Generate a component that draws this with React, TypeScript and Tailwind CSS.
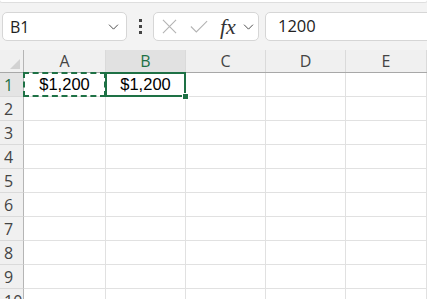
import React from 'react';

const COLS = ['A', 'B', 'C', 'D', 'E'];
const ROWS = [1, 2, 3, 4, 5, 6, 7, 8, 9, 10];
const WIDTHS = ['w-[82px]', 'w-[80px]', 'w-[80px]', 'w-[80px]', 'w-[81px]'];

const Chevron = ({ className }: { className?: string }) => (
  <svg viewBox="0 0 12 7" className={className} fill="none" stroke="#444" strokeWidth="1.1">
    <path d="M0.8 0.8 L6 6 L11.2 0.8" />
  </svg>
);

const FormulaBar = () => (
  <div className="flex h-[47px] items-start bg-[#f3f3f3] pt-[9px]">
    {/* name box */}
    <div className="ml-[2px] flex h-[29px] w-[125px] shrink-0 items-center rounded-[5px] border border-[#d6d6d6] bg-white pl-[7px] pr-[7px]">
      <span className="flex-1 text-[16px] text-[#222]">B1</span>
      <Chevron className="h-[6px] w-[11px]" />
    </div>
    {/* more menu dots */}
    <div className="flex h-[29px] w-[26px] shrink-0 flex-col items-center justify-center gap-[3px]">
      <span className="h-[3px] w-[3px] bg-[#444]" />
      <span className="h-[3px] w-[3px] bg-[#444]" />
      <span className="h-[3px] w-[3px] bg-[#444]" />
    </div>
    {/* cancel / enter / fx */}
    <div className="flex h-[29px] w-[106px] shrink-0 items-center rounded-[5px] border border-[#d6d6d6] bg-white">
      <svg viewBox="0 0 16 16" className="ml-[8px] h-[15px] w-[15px]" fill="none" stroke="#b4b4b4" strokeWidth="1.2">
        <path d="M1 1 L15 15 M15 1 L1 15" />
      </svg>
      <svg viewBox="0 0 20 14" className="ml-[13px] h-[13px] w-[18px]" fill="none" stroke="#b4b4b4" strokeWidth="1.2">
        <path d="M1 7 L7 13 L19 1" />
      </svg>
      <span className="ml-[12px] font-['Liberation_Serif',serif] text-[22px] italic leading-none text-[#333]">fx</span>
      <Chevron className="ml-[7px] h-[6px] w-[11px]" />
    </div>
    {/* formula input */}
    <div className="ml-[6px] flex h-[29px] w-[180px] shrink-0 items-center rounded-[5px] border border-[#d6d6d6] bg-white pl-[12px]">
      <span className="text-[16.5px] text-[#222]">1200</span>
    </div>
  </div>
);

const Grid = () => (
  <div className="flex flex-col">
    {/* column headers */}
    <div className="flex h-[23px] border-b border-[#a8a8a8] bg-[#f0f0f0]">
      <div className="relative h-full w-[24px] shrink-0 border-r border-[#b5b5b5]">
        <svg viewBox="0 0 10 10" className="absolute bottom-[3px] right-[3px] h-[10px] w-[10px]">
          <path d="M10 0 L10 10 L0 10 Z" fill="#d2d2d2" />
        </svg>
      </div>
      {COLS.map((c, i) => (
        <div
          key={c}
          className={`${WIDTHS[i]} flex h-full shrink-0 items-center justify-center border-r border-[#dadada] text-[16px] ${
            c === 'B' ? 'bg-[#e1e1e1] text-[#1e7145]' : 'text-[#444]'
          }`}
        >
          {c}
        </div>
      ))}
    </div>
    {/* rows */}
    {ROWS.map((r) => (
      <div key={r} className="flex h-[24px] shrink-0">
        <div
          className={`flex h-full w-[24px] shrink-0 items-center border-b border-r border-b-[#dadada] border-r-[#b5b5b5] pl-[4px] text-[16px] ${
            r === 1 ? 'bg-[#e4e4e4] text-[#1e7145]' : 'bg-[#f0f0f0] text-[#444]'
          }`}
        >
          {r}
        </div>
        {COLS.map((c, i) => (
          <div
            key={c}
            className={`${WIDTHS[i]} relative flex h-full shrink-0 items-center justify-center border-b border-r border-[#e1e1e1] font-['Liberation_Sans',sans-serif] text-[16.5px] text-black`}
          >
            {r === 1 && (c === 'A' || c === 'B') && <span className="relative z-10">$1,200</span>}
            {r === 1 && c === 'A' && (
              <div className="absolute -left-[1px] -top-[1px] bottom-[-1px] right-[-1px] border-2 border-dashed border-[#1e7145]" />
            )}
            {r === 1 && c === 'B' && (
              <>
                <div className="absolute -left-[1px] -top-[1px] bottom-[-1px] right-[-1px] border-2 border-[#1e7145]" />
                <div className="absolute bottom-[-3px] right-[-3px] z-20 h-[5px] w-[5px] bg-[#1e7145] outline outline-1 outline-white" />
              </>
            )}
          </div>
        ))}
      </div>
    ))}
  </div>
);

export default function App() {
  return (
    <div className="h-[299px] w-[427px] overflow-hidden bg-[#f3f3f3] font-['Open_Sans','Noto_Sans',sans-serif]">
      <div className="h-[3px] rounded-b-[6px] border-b border-[#dedede] bg-white shadow-[0_1px_2px_rgba(0,0,0,0.08)]" />
      <FormulaBar />
      <div className="bg-white">
        <Grid />
      </div>
    </div>
  );
}
